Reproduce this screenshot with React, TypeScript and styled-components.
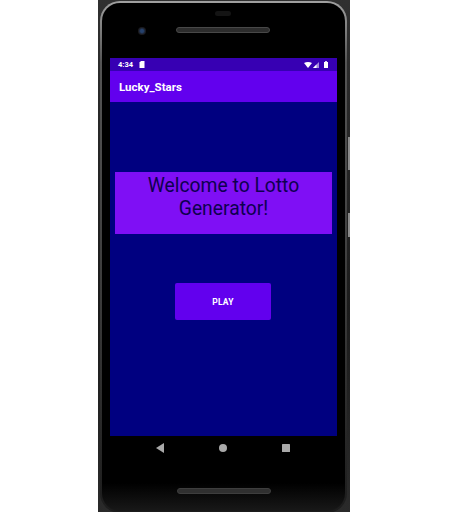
import React from "react";
import styled, { createGlobalStyle } from "styled-components";

const GlobalStyle = createGlobalStyle`
  html, body {
    margin: 0;
    padding: 0;
    background: #ffffff;
    overflow: hidden;
  }
  body {
    font-family: Roboto, "Liberation Sans", sans-serif;
  }
`;

const Page = styled.div`
  width: 449px;
  height: 512px;
  display: flex;
  padding-left: 98px;
  box-sizing: border-box;
  overflow: hidden;
`;

const Phone = styled.div`
  position: relative;
  width: 252px;
  height: 514px;
  box-sizing: border-box;
  padding: 1px 3px 0 2px;
  background: linear-gradient(#303030, #1c1c1c 60%, #2a2a2a);
  flex: none;
`;

const PhoneBody = styled.div`
  width: 100%;
  height: 512px;
  box-sizing: border-box;
  border-radius: 20px;
  border: 2px solid transparent;
  background:
    linear-gradient(#000 0, #000 480px, #1a1a1a 510px) padding-box,
    linear-gradient(#a0a0a0, #555 12%, #3a3a3a 60%, #1c1c1c) border-box;
  display: flex;
  flex-direction: column;
  align-items: center;
`;

const SideKey = styled.div<{ $top: number; $height: number }>`
  position: absolute;
  right: 0;
  top: ${(p) => p.$top}px;
  width: 2px;
  height: ${(p) => p.$height}px;
  background: #8a8a8a;
`;

const TopBezel = styled.div`
  position: relative;
  width: 100%;
  height: 55px;
  flex: none;
`;

const Camera = styled.div`
  position: absolute;
  left: 36px;
  top: 24px;
  width: 8px;
  height: 8px;
  border-radius: 50%;
  background: radial-gradient(circle, #26426e 0 25%, #1b1b20 60%);
`;

const Sensor = styled.div`
  position: absolute;
  left: 113px;
  top: 8px;
  width: 16px;
  height: 5px;
  border-radius: 3px;
  background: #141414;
`;

const Speaker = styled.div`
  width: 94px;
  height: 6px;
  box-sizing: border-box;
  border-radius: 3px;
  background: #2c2c2c;
  border: 1px solid #484848;
`;

const TopSpeaker = styled(Speaker)`
  position: absolute;
  left: 74px;
  top: 24px;
`;

const Screen = styled.div`
  width: 227px;
  height: 378px;
  flex: none;
  display: flex;
  flex-direction: column;
  background: #000080;
`;

const StatusBar = styled.div`
  height: 13px;
  flex: none;
  background: #3700b3;
  color: #fff;
  display: flex;
  align-items: center;
  justify-content: space-between;
  padding: 0 9px 0 8px;
  font-size: 7.5px;
  font-weight: 700;
`;

const StatusGroup = styled.div`
  display: flex;
  align-items: center;
  gap: 6px;
`;

const StatusIcons = styled.div`
  display: flex;
  align-items: center;
  gap: 1px;
`;

const AppBar = styled.div`
  height: 31px;
  flex: none;
  background: #6200ee;
  color: #fff;
  display: flex;
  align-items: center;
  padding-left: 9px;
  box-sizing: border-box;
  font-size: 11.5px;
  font-weight: 700;
`;

const Content = styled.div`
  flex: 1;
  display: flex;
  flex-direction: column;
  align-items: center;
  padding-top: 70px;
`;

const Banner = styled.div`
  width: 217px;
  height: 62px;
  background: #7f0ff5;
  color: #0e0050;
  font-size: 19.3px;
  line-height: 22.5px;
  text-align: center;
  padding-top: 3px;
  box-sizing: border-box;
`;

const PlayButton = styled.button`
  margin-top: 49px;
  margin-right: 1px;
  width: 96px;
  height: 37px;
  border: none;
  border-radius: 2px;
  padding: 1px 0 0;
  background: #6200ee;
  color: #fff;
  font-family: inherit;
  font-size: 8.5px;
  font-weight: 700;
  letter-spacing: 0.2px;
`;

const NavBar = styled.div`
  width: 134px;
  margin-top: 8px;
  margin-right: 1px;
  height: 8px;
  flex: none;
  display: flex;
  align-items: center;
  justify-content: space-between;
`;

const BottomSpeaker = styled(Speaker)`
  margin-top: 36px;
  background: #303030;
  border-color: #3e3e3e;
`;

const BatterySvg = styled.svg`
  margin-left: 4px;
`;

function BackIcon() {
  return (
    <svg width="8" height="10" viewBox="0 0 8 10">
      <path d="M8 0V10L0 5Z" fill="#a9a9a9" />
    </svg>
  );
}

function HomeIcon() {
  return (
    <svg width="8" height="8" viewBox="0 0 8 8">
      <circle cx="4" cy="4" r="4" fill="#a9a9a9" />
    </svg>
  );
}

function RecentsIcon() {
  return (
    <svg width="8" height="8" viewBox="0 0 8 8">
      <rect width="8" height="8" rx="0.5" fill="#a9a9a9" />
    </svg>
  );
}

function SdCardIcon() {
  return (
    <svg width="6" height="7" viewBox="0 0 6 7">
      <path d="M2 0H5.5V7H0.5V1.5Z" fill="#fff" />
    </svg>
  );
}

function WifiIcon() {
  return (
    <svg width="8" height="6" viewBox="0 0 8 6">
      <path d="M0 1C2.4 -0.3 5.6 -0.3 8 1L4 6Z" fill="#fff" />
    </svg>
  );
}

function SignalIcon() {
  return (
    <svg width="6" height="6" viewBox="0 0 6 6">
      <path d="M6 0V6H0Z" fill="#fff" fillOpacity="0.55" />
      <path d="M3.5 2.5V6H0Z" fill="#fff" />
    </svg>
  );
}

function BatteryIcon() {
  return (
    <BatterySvg width="4" height="7" viewBox="0 0 4 7">
      <path d="M1.2 0H2.8V1H4V7H0V1H1.2Z" fill="#fff" />
    </BatterySvg>
  );
}

export default function App() {
  return (
    <>
      <GlobalStyle />
      <Page>
        <Phone>
          <SideKey $top={137} $height={33} />
          <SideKey $top={213} $height={24} />
          <PhoneBody>
            <TopBezel>
              <Sensor />
              <Camera />
              <TopSpeaker />
            </TopBezel>
            <Screen>
              <StatusBar>
                <StatusGroup>
                  <span>4:34</span>
                  <SdCardIcon />
                </StatusGroup>
                <StatusIcons>
                  <WifiIcon />
                  <SignalIcon />
                  <BatteryIcon />
                </StatusIcons>
              </StatusBar>
              <AppBar>Lucky_Stars</AppBar>
              <Content>
                <Banner>Welcome to Lotto Generator!</Banner>
                <PlayButton>PLAY</PlayButton>
              </Content>
            </Screen>
            <NavBar>
              <BackIcon />
              <HomeIcon />
              <RecentsIcon />
            </NavBar>
            <BottomSpeaker />
          </PhoneBody>
        </Phone>
      </Page>
    </>
  );
}
